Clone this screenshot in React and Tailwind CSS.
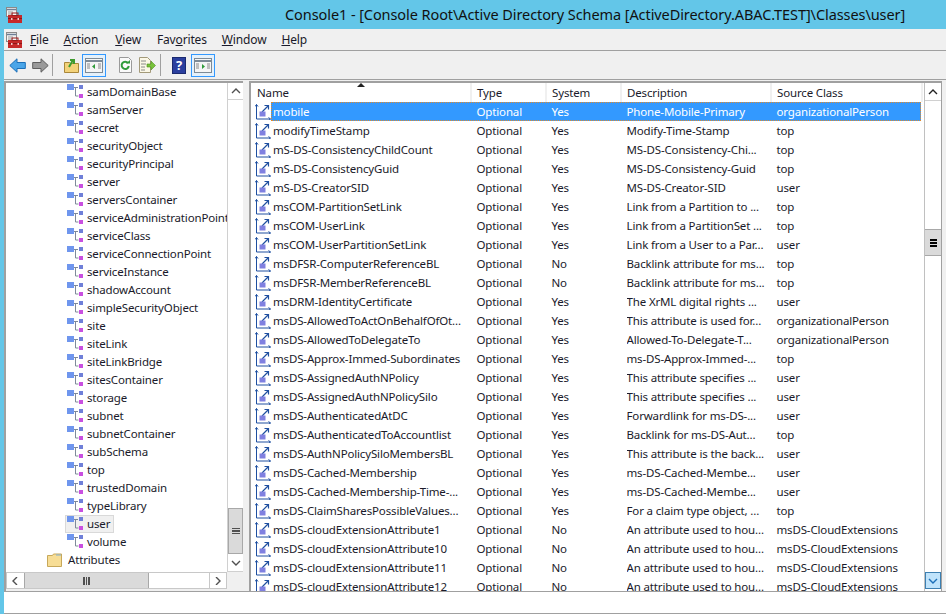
import React from "react";

const treeItems = [
  "samDomainBase", "samServer", "secret", "securityObject", "securityPrincipal", "server",
  "serversContainer", "serviceAdministrationPoint", "serviceClass", "serviceConnectionPoint",
  "serviceInstance", "shadowAccount", "simpleSecurityObject", "site", "siteLink", "siteLinkBridge",
  "sitesContainer", "storage", "subnet", "subnetContainer", "subSchema", "top", "trustedDomain",
  "typeLibrary", "user", "volume",
];

const OP = "organizationalPerson";
const CE = "msDS-CloudExtensions";
const rows = [
  ["mobile", "Yes", "Phone-Mobile-Primary", OP],
  ["modifyTimeStamp", "Yes", "Modify-Time-Stamp", "top"],
  ["mS-DS-ConsistencyChildCount", "Yes", "MS-DS-Consistency-Chi...", "top"],
  ["mS-DS-ConsistencyGuid", "Yes", "MS-DS-Consistency-Guid", "top"],
  ["mS-DS-CreatorSID", "Yes", "MS-DS-Creator-SID", "user"],
  ["msCOM-PartitionSetLink", "Yes", "Link from a Partition to ...", "top"],
  ["msCOM-UserLink", "Yes", "Link from a PartitionSet ...", "top"],
  ["msCOM-UserPartitionSetLink", "Yes", "Link from a User to a Par...", "user"],
  ["msDFSR-ComputerReferenceBL", "No", "Backlink attribute for ms...", "top"],
  ["msDFSR-MemberReferenceBL", "No", "Backlink attribute for ms...", "top"],
  ["msDRM-IdentityCertificate", "Yes", "The XrML digital rights ...", "user"],
  ["msDS-AllowedToActOnBehalfOfOt...", "Yes", "This attribute is used for...", OP],
  ["msDS-AllowedToDelegateTo", "Yes", "Allowed-To-Delegate-T...", OP],
  ["msDS-Approx-Immed-Subordinates", "Yes", "ms-DS-Approx-Immed-...", "top"],
  ["msDS-AssignedAuthNPolicy", "Yes", "This attribute specifies ...", "user"],
  ["msDS-AssignedAuthNPolicySilo", "Yes", "This attribute specifies ...", "user"],
  ["msDS-AuthenticatedAtDC", "Yes", "Forwardlink for ms-DS-...", "user"],
  ["msDS-AuthenticatedToAccountlist", "Yes", "Backlink for ms-DS-Aut...", "top"],
  ["msDS-AuthNPolicySiloMembersBL", "Yes", "This attribute is the back...", "user"],
  ["msDS-Cached-Membership", "Yes", "ms-DS-Cached-Membe...", "user"],
  ["msDS-Cached-Membership-Time-...", "Yes", "ms-DS-Cached-Membe...", "user"],
  ["msDS-ClaimSharesPossibleValues...", "Yes", "For a claim type object, ...", "top"],
  ["msDS-cloudExtensionAttribute1", "No", "An attribute used to hou...", CE],
  ["msDS-cloudExtensionAttribute10", "No", "An attribute used to hou...", CE],
  ["msDS-cloudExtensionAttribute11", "No", "An attribute used to hou...", CE],
  ["msDS-cloudExtensionAttribute12", "No", "An attribute used to hou...", CE],
];

const menus = [
  ["", "F", "ile", "ml-0"],
  ["", "A", "ction", "ml-[15px]"],
  ["", "V", "iew", "ml-[17px]"],
  ["Fav", "o", "rites", "ml-[16px]"],
  ["", "W", "indow", "ml-[15px]"],
  ["", "H", "elp", "ml-[15px]"],
];

function ConsoleIcon() {
  return (
    <svg width="16" height="16" viewBox="0 0 16 16" className="shrink-0">
      <rect x="0.5" y="0.5" width="10" height="9" fill="#f4f4f4" stroke="#8a8a8a" />
      <path d="M1 2.5h9" stroke="#6d7f96" strokeWidth="1.5" />
      <path d="M2 5h5M2 7h5" stroke="#9a9a9a" />
      <rect x="2" y="8" width="14" height="8" fill="#c62a2a" />
      <rect x="6" y="6" width="6" height="2.5" fill="none" stroke="#9b1c1c" />
      <path d="M2 11.5h14" stroke="#8e1616" />
      <rect x="5" y="11" width="1.5" height="2" fill="#f3c9c9" />
      <rect x="11.5" y="11" width="1.5" height="2" fill="#f3c9c9" />
    </svg>
  );
}

function ClassIcon() {
  return (
    <svg width="16" height="16" viewBox="0 0 16 16" className="shrink-0">
      <path d="M6 3.5h5M8.5 3.5v8.5h3" fill="none" stroke="#7f8a99" />
      <rect x="0" y="0" width="7" height="6" fill="#6f96ee" />
      <rect x="12" y="1" width="4" height="4" fill="#6f7fd8" />
      <rect x="12" y="10" width="4" height="4" fill="#c94fe0" />
    </svg>
  );
}

function AttrIcon() {
  return (
    <svg width="16" height="16" viewBox="0 0 16 16" className="shrink-0">
      <path d="M1.5 0.5v14.5h14" fill="none" stroke="#1f4fa0" />
      <path d="M0 2.5l1.5-2 1.5 2M13.5 13.5l2 1.5-2 1.5" fill="none" stroke="#1f4fa0" />
      <path d="M7 8l6-6M9.5 1.5h4v4" fill="none" stroke="#1f4fa0" strokeWidth="1.2" />
      <rect x="4.5" y="7.5" width="6" height="5" fill="#8080e0" />
    </svg>
  );
}

function Chevron({ dir, color = "#505050" }) {
  const d = {
    up: "M1 6l4-4 4 4",
    down: "M1 2l4 4 4-4",
    left: "M6 0l-4 4 4 4",
    right: "M3 0l4 4-4 4",
  }[dir];
  return (
    <svg width="10" height="8" viewBox="0 0 10 8">
      <path d={d} fill="none" stroke={color} strokeWidth="1.4" />
    </svg>
  );
}

function PaneIcon({ mirrored }) {
  return (
    <svg width="18" height="15" viewBox="0 0 18 15">
      <rect x="0.5" y="0.5" width="17" height="14" fill="#f5f5f5" stroke="#7d8a96" />
      <path d="M0.5 3h17" stroke="#7d8a96" strokeWidth="2" />
      <path d="M2 6h3M2 8h3M2 10h3M13 6h3M13 8h3M13 10h3" stroke="#8a8a8a" />
      <path d={mirrored ? "M8 6l3 2.5-3 2.5z" : "M10 6l-3 2.5 3 2.5z"} fill="#2f9b3a" />
    </svg>
  );
}

function Sep() {
  return <div className="w-px h-[22px] bg-[#a0a0a0]" />;
}

function Toolbar() {
  return (
    <div className="h-[29px] shrink-0 flex items-center pl-[5px] border-b border-[#a0a0a0]">
      <svg width="17" height="15" viewBox="0 0 17 15">
        <path d="M0.8 7.5L8 0.8v3.7h8.3v6H8v3.7z" fill="#4aa5e8" stroke="#1c6fb8" />
      </svg>
      <svg width="17" height="15" viewBox="0 0 17 15" className="ml-[6px]">
        <path d="M16.2 7.5L9 0.8v3.7H0.7v6H9v3.7z" fill="#9a9a9a" stroke="#5f5f5f" />
      </svg>
      <div className="ml-[3px] mr-[11px]">
        <Sep />
      </div>
      <svg width="15" height="16" viewBox="0 0 15 16">
        <path d="M0.5 5.5h5l1 1h8v9h-14z" fill="#f3d27a" stroke="#a9873a" />
        <path d="M5 10l4-7M6 3h4v4" fill="none" stroke="#3f9b2e" strokeWidth="2" />
      </svg>
      <div className="ml-[3px] w-[24px] h-[23px] flex items-center justify-center border border-[#3399ff] bg-[#e5f1fb]">
        <PaneIcon />
      </div>
      <svg width="13" height="16" viewBox="0 0 13 16" className="ml-[13px]">
        <path d="M0.5 0.5h9l3 3v12H0.5z" fill="#fafafa" stroke="#9a9a9a" />
        <path d="M9 6a3.6 3.6 0 1 0 .8 3" fill="none" stroke="#2f9b3a" strokeWidth="2" />
        <path d="M7 6.5h4V3z" fill="#2f9b3a" />
      </svg>
      <svg width="17" height="16" viewBox="0 0 17 16" className="ml-[7px]">
        <path d="M0.5 0.5h8l3 3v12H0.5z" fill="#fbf7e6" stroke="#a39a7a" />
        <path d="M2 4h5M2 7h5M2 10h4M2 13h4" stroke="#8a8a8a" />
        <path d="M8 7h4V4l4.5 4.5L12 13v-3H8z" fill="#78c23a" stroke="#4f8f22" strokeWidth="0.6" />
      </svg>
      <div className="ml-[4px] mr-[11px]">
        <Sep />
      </div>
      <div className="w-[14px] h-[17px] bg-[#2b3f9e] text-white text-[13px] font-bold leading-[15px] text-center border border-[#1b2a70]">
        ?
      </div>
      <div className="ml-[5px] w-[24px] h-[23px] flex items-center justify-center border border-[#3399ff] bg-[#e5f1fb]">
        <PaneIcon mirrored />
      </div>
    </div>
  );
}

function TreePane() {
  return (
    <div className="w-[239px] shrink-0 flex flex-col border-2 border-[#a0a0a0] border-r-0 border-b-0">
      <div className="flex h-[489px]">
        <div className="w-[221px] bg-white overflow-hidden pl-[59px]">
          {treeItems.map((name) => (
            <div key={name} className="h-[18px] flex items-center whitespace-nowrap">
              <div
                className={
                  "flex items-center gap-[4px] h-[18px] pr-[3px] pl-[1px] border " +
                  (name === "user" ? "bg-[#f0f0f0] border-[#d9d9d9]" : "border-transparent")
                }
              >
                <ClassIcon />
                <span>{name}</span>
              </div>
            </div>
          ))}
          <div className="h-[18px] flex items-center gap-[6px] -ml-[18px] whitespace-nowrap">
            <svg width="15" height="14" viewBox="0 0 15 14" className="shrink-0">
              <path d="M0.5 2.5h5l1-1.5h8v12.5h-14z" fill="#f7dd95" stroke="#c7a85a" />
              <path d="M9 2h5" stroke="#7fb0d8" />
            </svg>
            <span>Attributes</span>
          </div>
        </div>
        <div className="w-[16px] flex flex-col bg-white border-l border-[#d0d0d0] border-b">
          <div className="h-[17px] flex items-center justify-center border-b border-[#d0d0d0]">
            <Chevron dir="up" />
          </div>
          <div className="flex-1" />
          <div className="h-[46px] bg-[#dadada] border border-[#a8a8a8] flex flex-col items-center justify-center gap-[1px] mb-[1px]">
            <div className="w-[8px] h-[1.5px] bg-[#505050]" />
            <div className="w-[8px] h-[1.5px] bg-[#505050]" />
            <div className="w-[8px] h-[1.5px] bg-[#505050]" />
          </div>
          <div className="h-[16px] flex items-center justify-center">
            <Chevron dir="down" />
          </div>
        </div>
      </div>
      <div className="flex h-[19px] bg-[#f0f0f0]">
        <div className="w-[221px] h-[17px] flex bg-white border border-[#c8c8c8]">
          <div className="w-[17px] flex items-center justify-center">
            <Chevron dir="left" />
          </div>
          <div className="w-[125px] bg-[#dadada] border-x border-[#a8a8a8] flex items-center justify-center gap-[1px]">
            <div className="w-[1.5px] h-[8px] bg-[#505050]" />
            <div className="w-[1.5px] h-[8px] bg-[#505050]" />
            <div className="w-[1.5px] h-[8px] bg-[#505050]" />
          </div>
          <div className="flex-1" />
          <div className="w-[17px] flex items-center justify-center border-l border-[#c8c8c8]">
            <Chevron dir="right" />
          </div>
        </div>
      </div>
    </div>
  );
}

function HeaderCell({ width, children }) {
  return (
    <div
      className={
        width +
        " shrink-0 h-[19px] flex items-center pl-[5px] border-r-2 border-[#f0f0f0] whitespace-nowrap"
      }
    >
      {children}
    </div>
  );
}

function ListPane() {
  return (
    <div className="w-[693px] shrink-0 ml-[6px] flex border-2 border-r-[1px] border-b-0 border-[#a0a0a0] h-[510px]">
      <div className="w-[673px] shrink-0 bg-white overflow-hidden">
        <div className="relative flex h-[19px] pl-[1px]">
          <HeaderCell width="w-[220px]">Name</HeaderCell>
          <HeaderCell width="w-[75px]">Type</HeaderCell>
          <HeaderCell width="w-[75px]">System</HeaderCell>
          <HeaderCell width="w-[150px]">Description</HeaderCell>
          <HeaderCell width="w-[151px]">Source Class</HeaderCell>
          <svg width="8" height="4" viewBox="0 0 8 4" className="absolute left-[106px] top-0">
            <path d="M0 4l4-4 4 4z" fill="#222" />
          </svg>
        </div>
        {rows.map(([name, system, desc, source], i) => {
          const sel = i === 0;
          return (
            <div
              key={name}
              className={"flex items-center h-[19px] whitespace-nowrap " + (sel ? "text-white" : "")}
            >
              <div className="w-[4px] shrink-0" />
              <AttrIcon />
              <div
                className={
                  "flex items-center h-[19px] w-[650px] shrink-0 " +
                  (sel ? "bg-[#3399ff] border border-dotted border-[#e08a2c]" : "border border-transparent")
                }
              >
                <div className="w-[204.5px] shrink-0 pl-[1px] overflow-hidden">{name}</div>
                <div className="w-[75px] shrink-0">Optional</div>
                <div className="w-[75px] shrink-0">{system}</div>
                <div className="w-[150px] shrink-0 overflow-hidden">{desc}</div>
                <div>{source}</div>
              </div>
            </div>
          );
        })}
      </div>
      <div className="w-[17px] shrink-0 flex flex-col bg-white border-l border-[#c0c0c0]">
        <div className="h-[18px] flex items-center justify-center border-b border-[#d0d0d0]">
          <Chevron dir="up" color="#222" />
        </div>
        <div className="h-[128px]" />
        <div className="h-[27px] bg-[#dadada] border-y border-[#a8a8a8] flex flex-col items-center justify-center gap-[1px]">
          <div className="w-[7px] h-[2px] bg-black" />
          <div className="w-[7px] h-[2px] bg-black" />
          <div className="w-[7px] h-[2px] bg-black" />
        </div>
        <div className="flex-1" />
        <div className="h-[17px] mb-[2px] bg-[#bfe3fb] border border-[#3c7fb1] flex items-center justify-center">
          <Chevron dir="down" color="#1c6fb8" />
        </div>
      </div>
    </div>
  );
}

export default function App() {
  return (
    <div className="w-[946px] h-[614px] overflow-hidden bg-[#63c6e8] flex flex-col pl-[4px] font-['Noto_Sans',sans-serif] text-[11.5px] tracking-[-0.15px] text-[#1a1a2a]">
      <div className="h-[29px] shrink-0 -ml-[4px] pl-[6px] flex items-center">
        <ConsoleIcon />
        <div className="ml-[263px] text-[14.5px] tracking-[-0.08px] text-[#111] whitespace-nowrap">
          {"Console1 - [Console Root\\Active Directory Schema [ActiveDirectory.ABAC.TEST]\\Classes\\user]"}
        </div>
      </div>
      <div className="flex-1 min-h-0 bg-[#f0f0f0] flex flex-col">
        <div className="h-[22px] shrink-0 flex items-center border-b border-[#a0a0a0]">
          <div className="ml-[2px] mr-[8px]">
            <ConsoleIcon />
          </div>
          <div className="flex text-[12px]">
            {menus.map(([a, b, c, gap]) => (
              <span key={b + c} className={gap}>
                {a}
                <span className="underline">{b}</span>
                {c}
              </span>
            ))}
          </div>
        </div>
        <Toolbar />
        <div className="flex h-[511px] shrink-0 pt-[1px]">
          <TreePane />
          <ListPane />
        </div>
        <div className="flex-1 bg-white border-y border-[#a0a0a0]" />
      </div>
    </div>
  );
}
